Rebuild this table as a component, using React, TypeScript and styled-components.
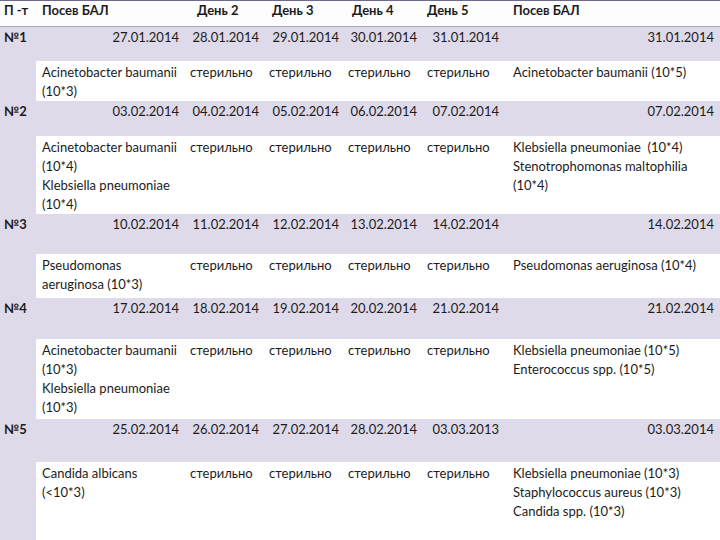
import React, { FC } from 'react';
import styled, { createGlobalStyle } from 'styled-components';

const GlobalStyle = createGlobalStyle`
  html, body {
    margin: 0;
    padding: 0;
    background: #ffffff;
    overflow: hidden;
  }
  body {
    font-family: Lato, "Open Sans", "Liberation Sans", sans-serif;
    color: #1c1c1c;
  }
`;

const LAV = '#dedaea';

const Table = styled.table`
  width: 720px;
  table-layout: fixed;
  border-collapse: collapse;
  border-spacing: 0;
  font-size: 13px;
  line-height: 19px;
`;

const HeadRow = styled.tr`
  height: 26px;
  background: #fdfdfe;
  border-top: 1px solid #6e6a8c;
  border-bottom: 1px solid #a8a6bd;
`;

const HeadCell = styled.th<{ $pad?: number }>`
  padding: 0 0 0 ${(p) => p.$pad ?? 5}px;
  text-align: left;
  vertical-align: top;
  font-weight: 700;
  white-space: nowrap;
`;

const DateRow = styled.tr<{ $h: number }>`
  height: ${(p) => p.$h}px;
  background: ${LAV};
`;

const OrgRow = styled.tr<{ $h: number }>`
  height: ${(p) => p.$h}px;
  background: #ffffff;
`;

const NumCell = styled.td`
  padding: 1px 0 0 4px;
  vertical-align: top;
  font-weight: 700;
  background: ${LAV};
  white-space: nowrap;
`;

const SideCell = styled.td`
  background: ${LAV};
`;

const DateCell = styled.td`
  padding: 1px 6px 0 0;
  text-align: right;
  vertical-align: top;
  white-space: nowrap;
`;

const OrgCell = styled.td<{ $pad?: number }>`
  padding: 2px 0 0 ${(p) => p.$pad ?? 5}px;
  vertical-align: top;
  white-space: pre;
`;

const Line = styled.div``;

const cols = [36, 149, 80, 80, 78, 82, 215];
const orgPads = [6, 5, 4, 3, 4, 8];

type Entry = {
  n: string;
  dates: string[];
  org: string[][];
  dh: number;
  oh: number;
};

const ST = ['стерильно'];

const data: Entry[] = [
  {
    n: '№1',
    dates: ['27.01.2014', '28.01.2014', '29.01.2014', '30.01.2014', '31.01.2014', '31.01.2014'],
    org: [['Acinetobacter baumanii', '(10*3)'], ST, ST, ST, ST, ['Acinetobacter baumanii (10*5)']],
    dh: 34,
    oh: 40,
  },
  {
    n: '№2',
    dates: ['03.02.2014', '04.02.2014', '05.02.2014', '06.02.2014', '07.02.2014', '07.02.2014'],
    org: [
      ['Acinetobacter baumanii', '(10*4)', 'Klebsiella pneumoniae', '(10*4)'],
      ST, ST, ST, ST,
      ['Klebsiella pneumoniae  (10*4)', 'Stenotrophomonas maltophilia', '(10*4)'],
    ],
    dh: 35,
    oh: 78,
  },
  {
    n: '№3',
    dates: ['10.02.2014', '11.02.2014', '12.02.2014', '13.02.2014', '14.02.2014', '14.02.2014'],
    org: [['Pseudomonas', 'aeruginosa (10*3)'], ST, ST, ST, ST, ['Pseudomonas aeruginosa (10*4)']],
    dh: 40,
    oh: 44,
  },
  {
    n: '№4',
    dates: ['17.02.2014', '18.02.2014', '19.02.2014', '20.02.2014', '21.02.2014', '21.02.2014'],
    org: [
      ['Acinetobacter baumanii', '(10*3)', 'Klebsiella pneumoniae', '(10*3)'],
      ST, ST, ST, ST,
      ['Klebsiella pneumoniae (10*5)', 'Enterococcus spp. (10*5)'],
    ],
    dh: 41,
    oh: 80,
  },
  {
    n: '№5',
    dates: ['25.02.2014', '26.02.2014', '27.02.2014', '28.02.2014', '03.03.2013', '03.03.2014'],
    org: [
      ['Candida albicans', '(<10*3)'],
      ST, ST, ST, ST,
      ['Klebsiella pneumoniae (10*3)', 'Staphylococcus aureus (10*3)', 'Candida spp. (10*3)'],
    ],
    dh: 43,
    oh: 100,
  },
];

const App: FC = () => {
  return (
    <>
      <GlobalStyle />
      <Table>
        <colgroup>
          {cols.map((w, i) => (
            <col key={i} style={{ width: w }} />
          ))}
        </colgroup>
        <thead>
          <HeadRow>
            <HeadCell $pad={4}>П -т</HeadCell>
            <HeadCell $pad={6}>Посев БАЛ</HeadCell>
            <HeadCell $pad={12}>День 2</HeadCell>
            <HeadCell $pad={7}>День 3</HeadCell>
            <HeadCell $pad={7}>День 4</HeadCell>
            <HeadCell $pad={4}>День 5</HeadCell>
            <HeadCell $pad={8}>Посев БАЛ</HeadCell>
          </HeadRow>
        </thead>
        <tbody>
          {data.map((r) => (
            <React.Fragment key={r.n}>
              <DateRow $h={r.dh}>
                <NumCell>{r.n}</NumCell>
                {r.dates.map((d, i) => (
                  <DateCell key={i}>{d}</DateCell>
                ))}
              </DateRow>
              <OrgRow $h={r.oh}>
                <SideCell />
                {r.org.map((lines, i) => (
                  <OrgCell key={i} $pad={orgPads[i]}>
                    {lines.map((l, j) => (
                      <Line key={j}>{l}</Line>
                    ))}
                  </OrgCell>
                ))}
              </OrgRow>
            </React.Fragment>
          ))}
        </tbody>
      </Table>
    </>
  );
};

export default App;
